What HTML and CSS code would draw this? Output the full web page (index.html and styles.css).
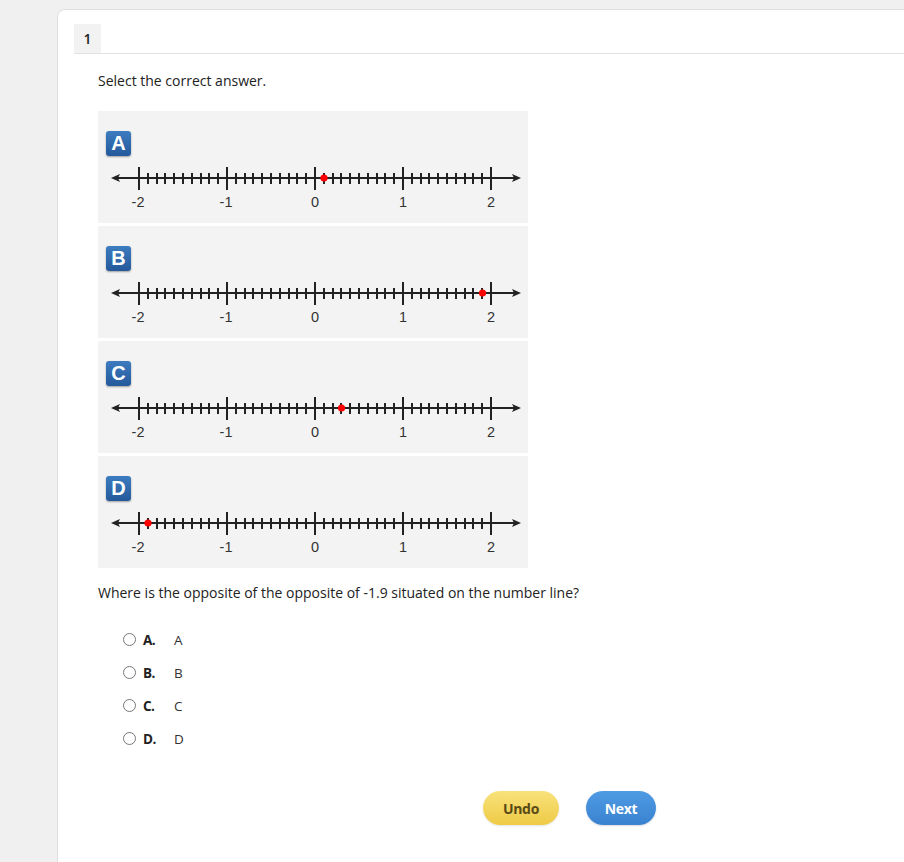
FILE: index.html
```html
<!DOCTYPE html>
<html>
<head>
<meta charset="utf-8">
<link rel="stylesheet" href="styles.css">
</head>
<body>
<svg class="defs" width="0" height="0">
  <defs>
    <symbol id="nl" viewBox="0 0 430 58">
      <line x1="18" y1="22" x2="418" y2="22" stroke="#222" stroke-width="2"/>
      <polygon points="13,22 22,18 20,22 22,26" fill="#222"/>
      <polygon points="423,22 414,18 416,22 414,26" fill="#222"/>
      <path stroke="#222" stroke-width="2" fill="none" d="M50 17V28M59 17V28M67 17V28M76 17V28M85 17V28M94 17V28M103 17V28M111 17V28M120 17V28M138 17V28M147 17V28M155 17V28M164 17V28M173 17V28M182 17V28M191 17V28M199 17V28M208 17V28M226 17V28M235 17V28M243 17V28M252 17V28M261 17V28M270 17V28M279 17V28M287 17V28M296 17V28M314 17V28M323 17V28M331 17V28M340 17V28M349 17V28M358 17V28M367 17V28M375 17V28M384 17V28"/>
      <path stroke="#222" stroke-width="2" fill="none" d="M41 11V34M129 11V34M217 11V34M305 11V34M393 11V34"/>
      <g text-anchor="middle" font-family="Liberation Sans, Arial, sans-serif" font-size="14.5" fill="#333">
        <text x="40" y="51">-2</text>
        <text x="128" y="51">-1</text>
        <text x="217" y="51">0</text>
        <text x="305" y="51">1</text>
        <text x="393" y="51">2</text>
      </g>
    </symbol>
  </defs>
</svg>
<div class="card">
  <div class="header"><div class="tab">1</div></div>
  <div class="content">
    <p class="prompt">Select the correct answer.</p>
    <div class="panels">
      <div class="panel">
        <div class="badge">A</div>
        <svg class="line" width="430" height="58" viewBox="0 0 430 58"><use href="#nl"/><circle cx="226" cy="22" r="3.6" fill="#f00"/></svg>
      </div>
      <div class="panel">
        <div class="badge">B</div>
        <svg class="line" width="430" height="58" viewBox="0 0 430 58"><use href="#nl"/><circle cx="384.5" cy="22" r="3.6" fill="#f00"/></svg>
      </div>
      <div class="panel">
        <div class="badge">C</div>
        <svg class="line" width="430" height="58" viewBox="0 0 430 58"><use href="#nl"/><circle cx="243.5" cy="22" r="3.6" fill="#f00"/></svg>
      </div>
      <div class="panel">
        <div class="badge">D</div>
        <svg class="line" width="430" height="58" viewBox="0 0 430 58"><use href="#nl"/><circle cx="50" cy="22" r="3.6" fill="#f00"/></svg>
      </div>
    </div>
    <p class="question">Where is the opposite of the opposite of -1.9 situated on the number line?</p>
    <div class="options">
      <div class="option"><span class="radio"></span><span class="letter">A.</span><span class="answer">A</span></div>
      <div class="option"><span class="radio"></span><span class="letter">B.</span><span class="answer">B</span></div>
      <div class="option"><span class="radio"></span><span class="letter">C.</span><span class="answer">C</span></div>
      <div class="option"><span class="radio"></span><span class="letter">D.</span><span class="answer">D</span></div>
    </div>
    <div class="actions">
      <button class="btn undo">Undo</button>
      <button class="btn next">Next</button>
    </div>
  </div>
</div>
</body>
</html>
```

FILE: styles.css
```css
html, body {
  margin: 0;
  padding: 0;
  background: #f0f0f0;
  overflow: hidden;
}
body {
  font-family: "Open Sans", "Liberation Sans", sans-serif;
  color: #222;
  font-size: 14px;
}
.defs {
  position: absolute;
  width: 0;
  height: 0;
}
.card {
  margin: 9px -30px 0 57px;
  background: #fff;
  border: 1px solid #dedede;
  border-radius: 8px 0 0 0;
  min-height: 860px;
  padding: 14px 0 0 16px;
  box-sizing: border-box;
}
.header {
  display: flex;
  height: 29px;
  border-bottom: 1px solid #e2e2e2;
}
.tab {
  width: 27px;
  background: #f2f2f2;
  display: flex;
  align-items: center;
  justify-content: center;
  font-size: 14px;
  font-weight: 600;
  color: #222;
}
.content {
  padding-left: 24px;
}
.prompt {
  margin: 17px 0 0;
  line-height: 19px;
}
.panels {
  margin-top: 21px;
  display: flex;
  flex-direction: column;
  gap: 3px;
  width: 430px;
}
.panel {
  background: #f3f3f3;
  height: 112px;
  padding-top: 20px;
  box-sizing: border-box;
}
.badge {
  margin-left: 8px;
  width: 25px;
  height: 25px;
  border-radius: 3px;
  background: linear-gradient(#3c7cc0, #24599a);
  box-shadow: 0 1px 2px rgba(0,0,0,0.35);
  color: #fff;
  font-family: "Liberation Sans", Arial, sans-serif;
  font-weight: bold;
  font-size: 20px;
  line-height: 25px;
  text-align: center;
}
.line {
  display: block;
}
.question {
  margin: 15px 0 0;
  line-height: 20px;
}
.options {
  margin-top: 20px;
  display: flex;
  flex-direction: column;
}
.option {
  height: 33px;
  display: flex;
  align-items: center;
}
.radio {
  margin-left: 25px;
  width: 11px;
  height: 11px;
  border: 1px solid #777;
  border-radius: 50%;
  background: #fff;
  margin-top: -1px;
}
.letter {
  margin-left: 7px;
  width: 31px;
  font-weight: 700;
  font-size: 13.5px;
  letter-spacing: -0.5px;
}
.answer {
  font-size: 13.5px;
  color: #333;
}
.actions {
  margin-top: 36px;
  margin-left: 385px;
  display: flex;
  gap: 27px;
}
.btn {
  height: 34px;
  border: none;
  border-radius: 17px;
  font-family: "Open Sans", "Liberation Sans", sans-serif;
  font-weight: 700;
  font-size: 14px;
  letter-spacing: -0.3px;
  padding: 0;
}
.undo {
  width: 76px;
  background: linear-gradient(#f9e27c, #eecb45);
  color: #5a4a15;
  box-shadow: 0 1px 2px rgba(0,0,0,0.12);
}
.next {
  width: 70px;
  background: linear-gradient(#4f9be3, #3a82d0);
  color: #fff;
  box-shadow: 0 1px 2px rgba(0,0,0,0.15);
}
```
